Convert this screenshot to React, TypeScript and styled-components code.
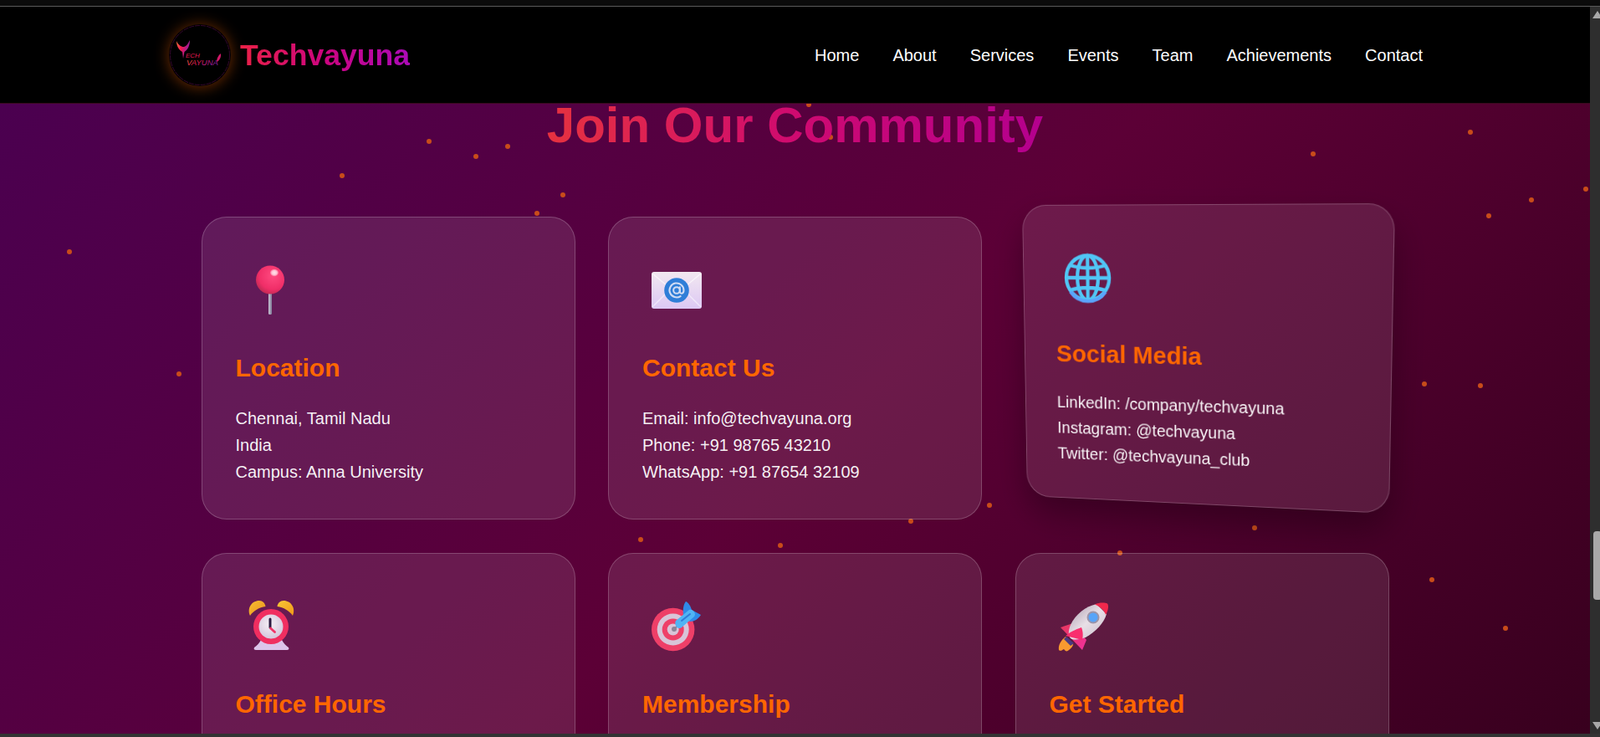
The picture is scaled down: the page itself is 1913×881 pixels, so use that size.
import React from "react";
import styled, { createGlobalStyle } from "styled-components";

const GlobalStyle = createGlobalStyle`
  html, body { margin: 0; padding: 0; height: 100%; overflow: hidden; background: #0a0a0a; }
  * { box-sizing: border-box; }
  body { font-family: "Liberation Sans", Arial, sans-serif; color: #fff; }
`;

const Frame = styled.div`
  width: 1913px;
  height: 881px;
  display: flex;
  flex-direction: column;
  overflow: hidden;
`;
const TopStrip = styled.div`
  height: 8px;
  flex: none;
  background: #0b0b0b;
  border-bottom: 1px solid #5a5a5a;
`;
const BottomStrip = styled.div`
  height: 4px;
  flex: none;
  background: #333;
`;
const Window = styled.div`
  flex: 1;
  min-height: 0;
  display: flex;
`;
const Viewport = styled.div`
  flex: 1;
  min-width: 0;
  display: flex;
  flex-direction: column;
  overflow: hidden;
`;
const Scrollbar = styled.div`
  width: 12px;
  flex: none;
  background: #2e2e2e;
  display: flex;
  flex-direction: column;
  justify-content: space-between;
  align-items: flex-start;
  position: relative;
  padding: 5px 0 5px 3px;
`;
const Arrow = styled.div<{ $down?: boolean }>`
  width: 0;
  height: 0;
  flex: none;
  border-left: 6px solid transparent;
  border-right: 6px solid transparent;
  ${(p) => (p.$down ? "border-top: 9px solid #a8a8a8;" : "border-bottom: 9px solid #a8a8a8;")}
`;
const Thumb = styled.div`
  position: absolute;
  top: 627px;
  left: 4px;
  width: 10px;
  height: 82px;
  border-radius: 4px;
  background: #a8a8a8;
`;
const Header = styled.header`
  height: 116px;
  flex: none;
  background: #000;
  border-bottom: 1px solid #3a0a1e;
  padding: 0 200px 0 202px;
  display: flex;
  align-items: center;
  justify-content: space-between;
  position: relative;
  z-index: 2;
`;
const Brand = styled.div`
  display: flex;
  align-items: center;
  gap: 11px;
`;
const LogoDisc = styled.div`
  width: 74px;
  height: 74px;
  border-radius: 50%;
  background: #000;
  box-shadow: 0 1px 18px rgba(255, 102, 0, 0.45);
`;
const BrandName = styled.span`
  font-size: 35.6px;
  font-weight: 700;
  padding-top: 2px;
  background: linear-gradient(90deg, #ea2146, #cc0480 50%, #ac0ab8);
  -webkit-background-clip: text;
  background-clip: text;
  color: transparent;
`;
const Nav = styled.nav`
  display: flex;
  gap: 40px;
  padding-top: 2px;
`;
const NavLink = styled.a`
  font-size: 20px;
  color: #fff;
  text-decoration: none;
`;
const Page = styled.main`
  flex: 1;
  min-height: 0;
  position: relative;
  overflow: hidden;
  background: linear-gradient(135deg, #4b0050 0%, #5c0036 52%, #38001e 100%);
`;
const Particles = styled.div`
  position: absolute;
  inset: 0;
`;
const Particle = styled.span`
  position: absolute;
  width: 6px;
  height: 6px;
  border-radius: 50%;
  background: #c84c1a;
`;
const Content = styled.div`
  position: relative;
  width: 1420px;
  margin: 0 auto;
  display: flex;
  flex-direction: column;
  align-items: center;
`;
const Heading = styled.h2`
  margin: 0 0 69px;
  height: 66px;
  padding-bottom: 14px;
  line-height: 52px;
  font-size: 60px;
  font-weight: 700;
  background: linear-gradient(90deg, #e6323f, #cf0a70 50%, #b4008e);
  -webkit-background-clip: text;
  background-clip: text;
  color: transparent;
`;
const Grid = styled.div`
  width: 100%;
  display: grid;
  grid-template-columns: repeat(3, 447px);
  grid-auto-rows: 362px;
  gap: 40px 39.5px;
`;
const Card = styled.article`
  padding: 57px 40px 40px;
  background: rgba(255, 255, 255, 0.1);
  border: 1px solid rgba(255, 255, 255, 0.2);
  border-radius: 30px;
`;
// Element box 447x362 mapped on the tilted quad measured in the picture.
const tilt = (() => {
  const [w, h] = [447, 362];
  const ox = 1214;
  const oy = 259;
  const [x0, y0] = [1222 - ox, 245 - oy];
  const [x1, y1] = [1668 - ox, 243 - oy];
  const [x2, y2] = [1661 - ox, 614 - oy];
  const [x3, y3] = [1228 - ox, 593 - oy];
  const dx1 = x1 - x2, dx2 = x3 - x2, dx3 = x0 - x1 + x2 - x3;
  const dy1 = y1 - y2, dy2 = y3 - y2, dy3 = y0 - y1 + y2 - y3;
  const den = dx1 * dy2 - dx2 * dy1;
  const g = (dx3 * dy2 - dx2 * dy3) / den;
  const k = (dx1 * dy3 - dx3 * dy1) / den;
  const a = x1 - x0 + g * x1, b = x3 - x0 + k * x3;
  const d = y1 - y0 + g * y1, e = y3 - y0 + k * y3;
  return `matrix3d(${a / w},${d / w},0,${g / w},${b / h},${e / h},0,${k / h},0,0,1,0,${x0},${y0},0,1)`;
})();
const TiltedCard = styled(Card)`
  transform-origin: 0 0;
  transform: ${tilt};
  box-shadow: 0 20px 40px rgba(0, 0, 0, 0.3);
`;
const IconBox = styled.div`
  width: 60px;
  height: 60px;
  margin-left: 11px;
  svg { display: block; width: 60px; height: 60px; overflow: visible; }
`;
const CardTitle = styled.h3`
  margin: 44px 0 0;
  font-size: 30px;
  line-height: 38px;
  font-weight: 700;
  color: #ff6600;
`;
const CardLines = styled.div`
  margin-top: 25px;
  font-size: 20px;
  line-height: 32px;
  color: rgba(255, 255, 255, 0.95);
`;

const Logo = () => (
  <LogoDisc>
    <svg width="74" height="74" viewBox="0 0 74 74">
      <defs>
        <linearGradient id="lg" x1="0" y1="0" x2="1" y2="0.4">
          <stop offset="0" stopColor="#ff7a3c" />
          <stop offset="0.45" stopColor="#f01850" />
          <stop offset="1" stopColor="#8a1ea8" />
        </linearGradient>
      </defs>
      <circle cx="37" cy="37" r="35.500" fill="none" stroke="#4a0a40" strokeWidth="0.7" strokeDasharray="6 1" />
      <path d="M9 20C9 26 12 31 16 33L17 41L18.500 33C22 31 25 26 25 19C23 23 21 26 18 27L16.500 27C13 26 10 23 9 20Z" fill="url(#lg)" />
      <text x="20" y="40" fontFamily="Liberation Sans, sans-serif" fontSize="8" fontStyle="italic" fill="#e01850">ECH</text>
      <text x="21" y="49" fontFamily="Liberation Sans, sans-serif" fontSize="9.500" fontStyle="italic" fill="url(#lg)">VAYUNA</text>
      <path d="M57 45c0-4 2-8 5-10 .5 4-1 8-5 10z" fill="#d01868" />
    </svg>
  </LogoDisc>
);

const PinIcon = () => (
  <svg viewBox="0 0 60 60">
    <defs>
      <radialGradient id="pinHead" cx="0.6" cy="0.35" r="0.75">
        <stop offset="0" stopColor="#ff4a80" />
        <stop offset="0.65" stopColor="#f02e68" />
        <stop offset="1" stopColor="#b0284c" />
      </radialGradient>
      <radialGradient id="pinShine">
        <stop offset="0" stopColor="#ffe4ec" />
        <stop offset="0.6" stopColor="#ffc4d4" />
        <stop offset="1" stopColor="#ff6a96" />
      </radialGradient>
      <linearGradient id="pinStick" x1="0" x2="1" y1="0" y2="0">
        <stop offset="0" stopColor="#c8c4d4" />
        <stop offset="1" stopColor="#807c98" />
      </linearGradient>
    </defs>
    <rect x="28" y="32" width="4" height="27" rx="1.500" fill="url(#pinStick)" />
    <circle cx="30" cy="17.500" r="17" fill="url(#pinHead)" />
    <ellipse cx="35" cy="9" rx="5" ry="4.200" fill="url(#pinShine)" />
  </svg>
);

const MailIcon = () => (
  <svg viewBox="0 0 60 60">
    <defs>
      <linearGradient id="envBody" x1="0" x2="0" y1="0" y2="1">
        <stop offset="0" stopColor="#f2e8f0" />
        <stop offset="1" stopColor="#dcc8f4" />
      </linearGradient>
    </defs>
    <rect x="0" y="8" width="60" height="44" rx="3" fill="url(#envBody)" />
    <path d="M1 10l29 24L59 10" fill="none" stroke="#fff" strokeOpacity="0.6" strokeWidth="1.500" />
    <path d="M1 50l20-20M59 50L39 30" fill="none" stroke="#fff" strokeOpacity="0.5" strokeWidth="1.500" />
    <circle cx="30" cy="30" r="14.800" fill="#2f7ed8" />
    <g transform="translate(30 30) scale(0.85) translate(-30 -30)" fill="none" stroke="#d0dcf4" strokeWidth="2.400">
      <circle cx="30" cy="30" r="4.500" />
      <path d="M34.500 25.500v6c0 4 5.500 4 5.500-1.500a10 10 0 1 0-4.500 8.300" strokeLinecap="round" />
    </g>
  </svg>
);

const GlobeIcon = () => (
  <svg viewBox="0 0 60 60">
    <g fill="none" stroke="#50c6f6" strokeWidth="4.400">
      <circle cx="30" cy="30" r="27" />
      <ellipse cx="30" cy="30" rx="13" ry="27" />
      <path d="M30 3v54M3 30h54M8 15c13 4 31 4 44 0M8 45c13-4 31-4 44 0" />
    </g>
    <path d="M8 47a27 27 0 0 0 44 0" fill="none" stroke="#5aa4fb" strokeWidth="4.400" />
  </svg>
);

const ClockIcon = () => (
  <svg viewBox="0 0 60 60">
    <defs>
      <linearGradient id="bell" x1="0" x2="1" y1="0" y2="1">
        <stop offset="0" stopColor="#f8c030" />
        <stop offset="1" stopColor="#e89020" />
      </linearGradient>
      <linearGradient id="bellR" x1="1" x2="0" y1="1" y2="0">
        <stop offset="0" stopColor="#f09818" />
        <stop offset="1" stopColor="#f8c838" />
      </linearGradient>
      <radialGradient id="face" cx="0.45" cy="0.4" r="0.7">
        <stop offset="0" stopColor="#f6f0f6" />
        <stop offset="1" stopColor="#cfc0d8" />
      </radialGradient>
    </defs>
    <path d="M6 17C2 8 8 -1 17 -1C21 -1 24 2 24.500 6C17 7 10 11 6 17Z" fill="url(#bell)" />
    <path d="M57 17C61 8 55 -1 46 -1C42 -1 39 2 38.500 6C46 7 53 11 57 17Z" fill="url(#bellR)" />
    <path d="M19 46h25c2 4 5 7 8 9 1 2 0 3-2 3H13c-2 0-3-1-2-3 3-2 6-5 8-9z" fill="#dcc4ea" />
    <circle cx="31" cy="30" r="21" fill="#f02e60" />
    <circle cx="31" cy="30" r="14.500" fill="url(#face)" />
    <path d="M30 21v10" stroke="#2a1a40" strokeWidth="3" strokeLinecap="round" />
    <path d="M30.500 32l5 4.500" stroke="#f03468" strokeWidth="2.800" strokeLinecap="round" />
  </svg>
);

const DartIcon = () => (
  <svg viewBox="0 0 60 60">
    <circle cx="25.700" cy="33.500" r="25.700" fill="#ee3f68" />
    <circle cx="25.700" cy="33.500" r="19" fill="#d8c4d8" />
    <circle cx="25.700" cy="33.500" r="13" fill="#ee3f68" />
    <circle cx="25.700" cy="33.500" r="7" fill="#d8c4d8" />
    <circle cx="27" cy="33" r="3" fill="#8c8498" />
    <path d="M27 33l10-9" stroke="#8c8498" strokeWidth="2" />
    <path d="M38 16C37 8 39 2 41 0c3 1 6 6 7 10l11 6c-3 5-8 8-13 8z" fill="#2f8ae8" />
    <path d="M29 23l16-13c3-1 6 1 7 5 0 2-1 3-2 4L36 31c-2 2-6 1-7-2-1-2-1-4 0-6z" fill="#50b4f4" />
    <path d="M36 23l10-8" stroke="#2f7cd8" strokeWidth="2" strokeLinecap="round" />
  </svg>
);

const RocketIcon = () => (
  <svg viewBox="0 0 60 60">
    <defs>
      <linearGradient id="hull" x1="0" x2="1" y1="0" y2="1">
        <stop offset="0" stopColor="#a898ac" />
        <stop offset="0.5" stopColor="#e8dfe6" />
        <stop offset="1" stopColor="#c8bccc" />
      </linearGradient>
      <linearGradient id="finBack" x1="0" x2="1" y1="0" y2="1">
        <stop offset="0" stopColor="#e8385c" />
        <stop offset="1" stopColor="#f0309c" />
      </linearGradient>
    </defs>
    <path d="M2 31L17 26L33 46L28 58Z" fill="url(#finBack)" />
    <path d="M8 42C3 46 -1 52 0 58C2 60 4 58 6 57C8 60 10 60 12 58C15 56 17 53 17 51Z" fill="#f89a30" />
    <path d="M9 42L18 50L14 53L6 45Z" fill="#4a3a80" />
    <path d="M45 3C32 6 20 15 14 28C11 35 11 41 14 44C18 47 26 45 32 43C44 36 54 26 57 15Z" fill="url(#hull)" />
    <path d="M43 3.500C48 1 55 1 58 2.500C60 5 59 11 56 16C54 10 49 6 43 3.500Z" fill="#f0284c" />
    <path d="M27 31C24 32 15 35 8 41L28 46C29 41 29 36 27 31Z" fill="#f82e6e" />
    <circle cx="41" cy="19" r="6.500" fill="#58a4f8" stroke="#9c94a8" strokeWidth="2" />
  </svg>
);

const dots: [number, number][] = [
  [510, 42], [566, 60], [604, 48], [406, 83], [670, 106], [639, 128], [80, 174], [211, 320],
  [964, -2], [990, 37], [1755, 31], [1567, 57], [1828, 112], [1777, 131], [1893, 99],
  [1700, 332], [1767, 334], [1180, 477], [1086, 496], [1497, 504], [763, 518], [930, 525],
  [1336, 534], [1709, 566], [1797, 624],
];

const cards: { title: string; icon: React.ReactNode; tilted?: boolean; lines: string[] }[] = [
  { title: "Location", icon: <PinIcon />, lines: ["Chennai, Tamil Nadu", "India", "Campus: Anna University"] },
  { title: "Contact Us", icon: <MailIcon />, lines: ["Email: info@techvayuna.org", "Phone: +91 98765 43210", "WhatsApp: +91 87654 32109"] },
  { title: "Social Media", icon: <GlobeIcon />, tilted: true, lines: ["LinkedIn: /company/techvayuna", "Instagram: @techvayuna", "Twitter: @techvayuna_club"] },
  { title: "Office Hours", icon: <ClockIcon />, lines: [] },
  { title: "Membership", icon: <DartIcon />, lines: [] },
  { title: "Get Started", icon: <RocketIcon />, lines: [] },
];

const navItems = ["Home", "About", "Services", "Events", "Team", "Achievements", "Contact"];

export default function App() {
  return (
    <Frame>
      <GlobalStyle />
      <TopStrip />
      <Window>
        <Viewport>
          <Header>
            <Brand>
              <Logo />
              <BrandName>Techvayuna</BrandName>
            </Brand>
            <Nav>
              {navItems.map((n) => (
                <NavLink key={n}>{n}</NavLink>
              ))}
            </Nav>
          </Header>
          <Page>
            <Particles>
              {dots.map(([x, y]) => (
                <Particle key={`${x}-${y}`} style={{ left: x, top: y }} />
              ))}
            </Particles>
            <Content>
              <Heading>Join Our Community</Heading>
              <Grid>
                {cards.map((c) => {
                  const Box = c.tilted ? TiltedCard : Card;
                  return (
                    <Box key={c.title}>
                      <IconBox>{c.icon}</IconBox>
                      <CardTitle>{c.title}</CardTitle>
                      <CardLines>
                        {c.lines.map((l) => (
                          <div key={l}>{l}</div>
                        ))}
                      </CardLines>
                    </Box>
                  );
                })}
              </Grid>
            </Content>
          </Page>
        </Viewport>
        <Scrollbar>
          <Arrow />
          <Thumb />
          <Arrow $down />
        </Scrollbar>
      </Window>
      <BottomStrip />
    </Frame>
  );
}
